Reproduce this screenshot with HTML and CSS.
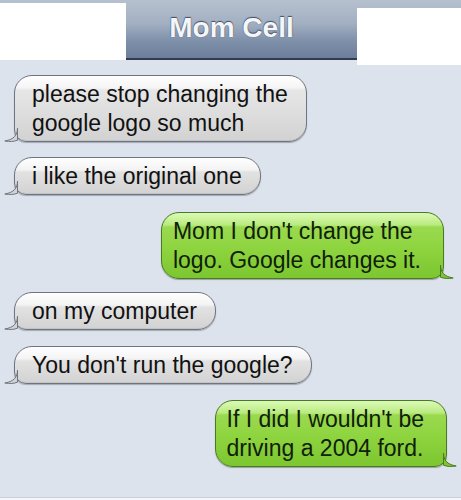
FILE: index.html
```html
<!DOCTYPE html>
<html>
<head>
<meta charset="utf-8">
<link rel="stylesheet" href="styles.css">
</head>
<body>
<div class="screen">
  <header class="topbar">
    <h1 class="title">Mom Cell</h1>
  </header>
  <div class="redact redact-left"></div>
  <div class="redact redact-right"></div>
  <main class="thread">
    <div class="row in">
      <div class="bubble gray">please stop changing the<br>google logo so much
        <svg class="tail" width="14" height="14" viewBox="0 0 14 14"><path d="M13.5 0 C13.5 7 10 11.5 0.8 13 C6 13.8 10 13.6 13.5 12.2 Z"/></svg>
      </div>
    </div>
    <div class="row in r2">
      <div class="bubble gray">i like the original one
        <svg class="tail" width="14" height="14" viewBox="0 0 14 14"><path d="M13.5 0 C13.5 7 10 11.5 0.8 13 C6 13.8 10 13.6 13.5 12.2 Z"/></svg>
      </div>
    </div>
    <div class="row out r3">
      <div class="bubble green">Mom I don't change the<br>logo. Google changes it.
        <svg class="tail" width="14" height="14" viewBox="0 0 14 14"><path d="M0.5 0 C0.5 7 4 11.5 13.2 13 C8 13.8 4 13.6 0.5 12.2 Z"/></svg>
      </div>
    </div>
    <div class="row in r4">
      <div class="bubble gray">on my computer
        <svg class="tail" width="14" height="14" viewBox="0 0 14 14"><path d="M13.5 0 C13.5 7 10 11.5 0.8 13 C6 13.8 10 13.6 13.5 12.2 Z"/></svg>
      </div>
    </div>
    <div class="row in r5">
      <div class="bubble gray">You don't run the google?
        <svg class="tail" width="14" height="14" viewBox="0 0 14 14"><path d="M13.5 0 C13.5 7 10 11.5 0.8 13 C6 13.8 10 13.6 13.5 12.2 Z"/></svg>
      </div>
    </div>
    <div class="row out r6">
      <div class="bubble green">If I did I wouldn't be<br>driving a 2004 ford.
        <svg class="tail" width="14" height="14" viewBox="0 0 14 14"><path d="M0.5 0 C0.5 7 4 11.5 13.2 13 C8 13.8 4 13.6 0.5 12.2 Z"/></svg>
      </div>
    </div>
  </main>
  <div class="bottomline"></div>
</div>
</body>
</html>
```
FILE: styles.css
```css
html, body {
  margin: 0;
  padding: 0;
}
body {
  background: #dce2eb;
  font-family: "Liberation Sans", Arial, sans-serif;
}
.screen {
  position: relative;
  width: 461px;
  height: 500px;
  overflow: hidden;
  background: #dde3ec;
  display: flex;
  flex-direction: column;
}
.topbar {
  height: 58px;
  border-bottom: 2px solid #2f3c52;
  background: linear-gradient(to bottom, #b6c1cf 0%, #a3b0c2 40%, #7f90aa 70%, #6c7e9a 100%);
  display: flex;
  align-items: center;
  justify-content: center;
  flex-shrink: 0;
}
.title {
  margin: 0;
  font-size: 28px;
  font-weight: bold;
  color: #f4f6f9;
  text-shadow: 0 -1px 1px #3f4c62, 0 0 1px #4b5a72;
  padding-left: 2px;
  padding-bottom: 2px;
}
.redact {
  position: absolute;
  background: #ffffff;
}
.redact-left {
  left: 0;
  top: 3px;
  width: 126px;
  height: 57px;
}
.redact-right {
  left: 357px;
  top: 8px;
  width: 104px;
  height: 57px;
}
.thread {
  display: flex;
  flex-direction: column;
  padding: 15px 14px 0 14px;
}
.row {
  display: flex;
}
.row.out {
  justify-content: flex-end;
}
.r2 { margin-top: 15px; }
.r3 { margin-top: 17px; margin-right: 3px; }
.r4 { margin-top: 13px; }
.r5 { margin-top: 16px; }
.r6 { margin-top: 16px; }
.bubble {
  position: relative;
  font-size: 23px;
  line-height: 29px;
  white-space: nowrap;
  border-radius: 18px;
  color: #111;
}
.bubble.gray {
  padding: 4px 18px 3px 17px;
  border: 1px solid #6f7580;
  border-bottom-left-radius: 12px;
  background:
    linear-gradient(to bottom, rgba(255,255,255,0.95) 0px, rgba(255,255,255,0.55) 12px, rgba(255,255,255,0) 14px),
    linear-gradient(to bottom, #ececec 0%, #dedede 55%, #d2d2d2 100%);
  box-shadow: 0 1px 1px rgba(90,100,115,0.45), inset 0 -1px 0 #c4c4c4;
}
.bubble.green {
  padding: 4px 22px 3px 11px;
  border: 1px solid #4a7a26;
  border-bottom-right-radius: 12px;
  color: #10200a;
  background:
    linear-gradient(to bottom, rgba(230,255,200,0.85) 0px, rgba(220,255,180,0.45) 12px, rgba(220,255,180,0) 14px),
    linear-gradient(to bottom, #a2dd5a 0%, #8ed43f 55%, #7cc630 100%);
  box-shadow: 0 1px 1px rgba(60,80,50,0.45);
}
.tail {
  position: absolute;
  bottom: -1px;
  overflow: visible;
}
.gray .tail {
  left: -11px;
}
.gray .tail path {
  fill: #d3d3d3;
  stroke: #6f7580;
  stroke-width: 1;
}
.green .tail {
  right: -11px;
}
.green .tail path {
  fill: #7cc630;
  stroke: #4a7a26;
  stroke-width: 1;
}
.bottomline {
  position: absolute;
  left: 0;
  right: 0;
  bottom: 0;
  height: 2px;
  background: #f4f6f9;
  border-top: 1px solid #c9d0da;
}
```
